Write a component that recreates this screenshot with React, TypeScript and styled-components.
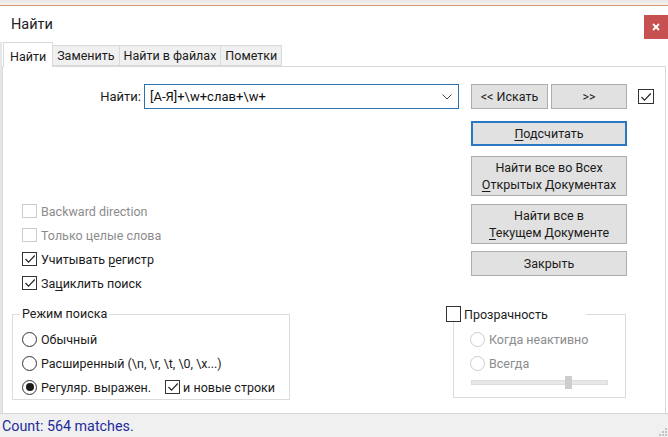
import React from 'react';
import styled, { createGlobalStyle } from 'styled-components';

const GlobalStyle = createGlobalStyle`
  * { box-sizing: border-box; }
  html, body { margin: 0; padding: 0; background: #ffffff; }
  body {
    font-family: Roboto, "Noto Sans", "Liberation Sans", sans-serif;
    font-size: 12.5px;
    color: #1b1b1b;
  }
`;

const Window = styled.div`
  width: 668px;
  height: 437px;
  display: flex;
  flex-direction: column;
  overflow: hidden;
  background: #ffffff;
`;

const TopEdge = styled.div`
  height: 6px;
  flex-shrink: 0;
  background: linear-gradient(#e8e8e8, #f6f0ea);
  border-bottom: 1px solid #cf9a72;
`;

const TitleBar = styled.div`
  height: 36px;
  flex-shrink: 0;
  display: flex;
  justify-content: space-between;
  align-items: flex-start;
  padding-left: 11px;
`;

const Title = styled.div`
  font-size: 14.5px;
  line-height: 20px;
  margin-top: 9px;
  color: #222222;
`;

const CloseButton = styled.div`
  width: 24px;
  height: 24px;
  margin-top: 9px;
  background: #c75151;
  display: flex;
  align-items: center;
  justify-content: center;
`;

const Body = styled.div`
  flex: 1;
  display: flex;
  flex-direction: column;
  border-left: 2px solid #e6e6e6;
  padding-right: 2px;
  min-height: 0;
`;

const TabRow = styled.div`
  height: 24px;
  display: flex;
  align-items: flex-end;
  padding-left: 1px;
  flex-shrink: 0;
`;

const Tab = styled.div<{ $active?: boolean }>`
  height: ${p => (p.$active ? 25 : 21)}px;
  padding: ${p => (p.$active ? '3px 6px 0' : '0 4px')};
  margin-bottom: ${p => (p.$active ? -1 : 0)}px;
  margin-left: -1px;
  &:first-child { margin-left: 0; }
  border: 1px solid #d9d9d9;
  border-bottom: ${p => (p.$active ? 'none' : '1px solid #d9d9d9')};
  background: ${p => (p.$active ? '#ffffff' : '#f0f0f0')};
  display: flex;
  align-items: center;
  font-size: 12.5px;
  color: #1b1b1b;
  position: relative;
  z-index: ${p => (p.$active ? 2 : 1)};
`;

const Panel = styled.div`
  flex: 1;
  border: 1px solid #d9d9d9;
  border-bottom: none;
  padding-top: 17px;
  display: flex;
  flex-direction: column;
`;

const TopSection = styled.div`
  display: flex;
  align-items: flex-start;
`;

const LeftCol = styled.div`
  width: 468px;
  display: flex;
  flex-direction: column;
`;

const FindRow = styled.div`
  height: 25px;
  display: flex;
  align-items: center;
`;

const FindLabel = styled.label`
  width: 141px;
  padding-right: 3px;
  text-align: right;
  font-size: 13px;
  color: #1b1b1b;
`;

const Combo = styled.div`
  width: 315px;
  height: 25px;
  border: 1px solid #2e72ad;
  display: flex;
  align-items: center;
  justify-content: space-between;
  padding: 0 6px 0 5px;
  font-size: 13px;
  color: #111111;
`;

const CheckList = styled.div`
  margin-top: 90px;
  padding-left: 19px;
  display: flex;
  flex-direction: column;
`;

const OptionRow = styled.div<{ $disabled?: boolean }>`
  height: 24px;
  display: flex;
  align-items: center;
  gap: 4px;
  color: ${p => (p.$disabled ? '#8c8c8c' : '#1b1b1b')};
  white-space: nowrap;
`;

const Box = styled.span<{ $disabled?: boolean; $w?: number; $h?: number }>`
  width: ${p => p.$w ?? 15}px;
  height: ${p => p.$h ?? 14}px;
  flex-shrink: 0;
  border: 1px solid ${p => (p.$disabled ? '#cccccc' : '#333333')};
  background: #ffffff;
  display: flex;
  align-items: center;
  justify-content: center;
`;

const RadioCircle = styled.span<{ $disabled?: boolean; $on?: boolean }>`
  width: 15px;
  height: 15px;
  flex-shrink: 0;
  border-radius: 50%;
  border: 1px solid ${p => (p.$disabled ? '#cccccc' : '#333333')};
  background: #ffffff;
  display: flex;
  align-items: center;
  justify-content: center;
  &::after {
    content: '';
    display: ${p => (p.$on ? 'block' : 'none')};
    width: 8px;
    height: 8px;
    border-radius: 50%;
    background: #1b1b1b;
  }
`;

const U = styled.span`
  text-decoration: underline;
  text-underline-offset: 2px;
`;

const RightCol = styled.div`
  display: flex;
  flex-direction: column;
`;

const ButtonPair = styled.div`
  display: flex;
  align-items: center;
  gap: 3px;
`;

const Button = styled.div<{ $w: number; $h: number; $mt?: number; $focused?: boolean }>`
  width: ${p => p.$w}px;
  height: ${p => p.$h}px;
  margin-top: ${p => p.$mt ?? 0}px;
  background: #e1e1e1;
  border: ${p => (p.$focused ? '2px solid #2a78c0' : '1px solid #adadad')};
  display: flex;
  align-items: center;
  justify-content: center;
  text-align: center;
  font-size: 12.5px;
  line-height: 17px;
  color: #1b1b1b;
`;

const SideCheck = styled.div`
  margin-left: 8px;
  display: flex;
`;

const BottomSection = styled.div`
  display: flex;
  align-items: flex-start;
  margin-top: 11px;
`;

const Group = styled.fieldset<{ $ml: number; $w: number }>`
  margin: 0 0 0 ${p => p.$ml}px;
  width: ${p => p.$w}px;
  border: 1px solid #dcdcdc;
  padding: 5px 0 0 ${p => (p.$ml > 100 ? 16 : 9)}px;
  min-width: 0;
`;

const Legend = styled.legend`
  padding: 0 2px;
  margin-left: -2px;
  line-height: 16px;
  font-size: 12.5px;
  color: #1b1b1b;
`;

const CheckLegend = styled.legend`
  width: 140px;
  margin-left: -24px;
  padding: 0;
  height: 16px;
  background: #ffffff;
  display: flex;
  align-items: center;
  gap: 3px;
  font-size: 12.5px;
  color: #1b1b1b;
`;

const InlineCheck = styled.span`
  display: flex;
  align-items: center;
  gap: 3px;
  margin-left: 10px;
`;

const SliderTrack = styled.div`
  position: relative;
  width: 137px;
  height: 5px;
  margin: 5px 0 12px 1px;
  background: #e7e7e7;
  border: 1px solid #dddddd;
`;

const SliderThumb = styled.div`
  position: absolute;
  left: 93px;
  top: -5px;
  width: 7px;
  height: 13px;
  background: #cdcdcd;
`;

const StatusBar = styled.div`
  height: 24px;
  flex-shrink: 0;
  border-top: 1px solid #d7d7d7;
  background: #f0f0f0;
  padding-left: 2px;
  display: flex;
  align-items: center;
  font-size: 14.3px;
  color: #1f2c9c;
  position: relative;
`;

const Grip = styled.svg`
  position: absolute;
  right: 0;
  bottom: 0;
`;

const Tick: React.FC = () => (
  <svg width={12} height={12} viewBox="0 0 12 12">
    <polyline points="1.5,6 4.5,9.2 10.8,2.5" fill="none" stroke="#222" strokeWidth="1.1" />
  </svg>
);

const CheckBox: React.FC<{ checked?: boolean; disabled?: boolean; w?: number; h?: number }> = ({ checked, disabled, w, h }) => (
  <Box $disabled={disabled} $w={w} $h={h}>{checked && <Tick />}</Box>
);

export default function App() {
  return (
    <>
      <GlobalStyle />
      <Window>
        <TopEdge />
        <TitleBar>
          <Title>Найти</Title>
          <CloseButton>
            <svg width="8" height="8" viewBox="0 0 8 8">
              <path d="M1 1 L7 7 M7 1 L1 7" stroke="#ffffff" strokeWidth="1.8" />
            </svg>
          </CloseButton>
        </TitleBar>
        <Body>
          <TabRow>
            <Tab $active>Найти</Tab>
            <Tab>Заменить</Tab>
            <Tab>Найти в файлах</Tab>
            <Tab>Пометки</Tab>
          </TabRow>
          <Panel>
            <TopSection>
              <LeftCol>
                <FindRow>
                  <FindLabel>Найти:</FindLabel>
                  <Combo>
                    <span>[А-Я]+\w+слав+\w+</span>
                    <svg width="10" height="6" viewBox="0 0 10 6">
                      <polyline points="0.5,0.5 5,5 9.5,0.5" fill="none" stroke="#444" strokeWidth="1" />
                    </svg>
                  </Combo>
                </FindRow>
                <CheckList>
                  <OptionRow $disabled><CheckBox disabled /><span>Backward direction</span></OptionRow>
                  <OptionRow $disabled><CheckBox disabled /><span>Только целые слова</span></OptionRow>
                  <OptionRow><CheckBox checked /><span>Учитывать <U>р</U>егистр</span></OptionRow>
                  <OptionRow><CheckBox checked /><span>За<U>ц</U>иклить поиск</span></OptionRow>
                </CheckList>
              </LeftCol>
              <RightCol>
                <ButtonPair>
                  <Button $w={77} $h={25}>&lt;&lt; Искать</Button>
                  <Button $w={76} $h={25}>&gt;&gt;</Button>
                  <SideCheck><CheckBox checked w={16} h={15} /></SideCheck>
                </ButtonPair>
                <Button $w={156} $h={25} $mt={12} $focused><span><U>П</U>одсчитать</span></Button>
                <Button $w={156} $h={40} $mt={10}>
                  <span>Найти все во Всех<br /><U>О</U>ткрытых Документах</span>
                </Button>
                <Button $w={156} $h={40} $mt={8}>
                  <span>Найти все в<br /><U>Т</U>екущем Документе</span>
                </Button>
                <Button $w={156} $h={25} $mt={7}>Закрыть</Button>
              </RightCol>
            </TopSection>
            <BottomSection>
              <Group $ml={9} $w={278}>
                <Legend>Режим поиска</Legend>
                <OptionRow><RadioCircle /><span>Обычный</span></OptionRow>
                <OptionRow><RadioCircle /><span>Расширенный (\n, \r, \t, \0, \x...)</span></OptionRow>
                <OptionRow>
                  <RadioCircle $on /><span>Регуляр. выражен.</span>
                  <InlineCheck><CheckBox checked /><span>и новые строки</span></InlineCheck>
                </OptionRow>
              </Group>
              <Group $ml={163} $w={173}>
                <CheckLegend><CheckBox w={15} h={16} /><span>Прозрачность</span></CheckLegend>
                <OptionRow $disabled><RadioCircle $disabled /><span>Когда неактивно</span></OptionRow>
                <OptionRow $disabled><RadioCircle $disabled /><span>Всегда</span></OptionRow>
                <SliderTrack><SliderThumb /></SliderTrack>
              </Group>
            </BottomSection>
          </Panel>
        </Body>
        <StatusBar>
          Count: 564 matches.
          <Grip width="10" height="10" viewBox="0 0 10 10">
            <rect x="7" y="1" width="2" height="2" fill="#c4c4c4" />
            <rect x="4" y="4" width="2" height="2" fill="#c4c4c4" />
            <rect x="7" y="4" width="2" height="2" fill="#c4c4c4" />
            <rect x="1" y="7" width="2" height="2" fill="#c4c4c4" />
            <rect x="4" y="7" width="2" height="2" fill="#c4c4c4" />
            <rect x="7" y="7" width="2" height="2" fill="#c4c4c4" />
          </Grip>
        </StatusBar>
      </Window>
    </>
  );
}
